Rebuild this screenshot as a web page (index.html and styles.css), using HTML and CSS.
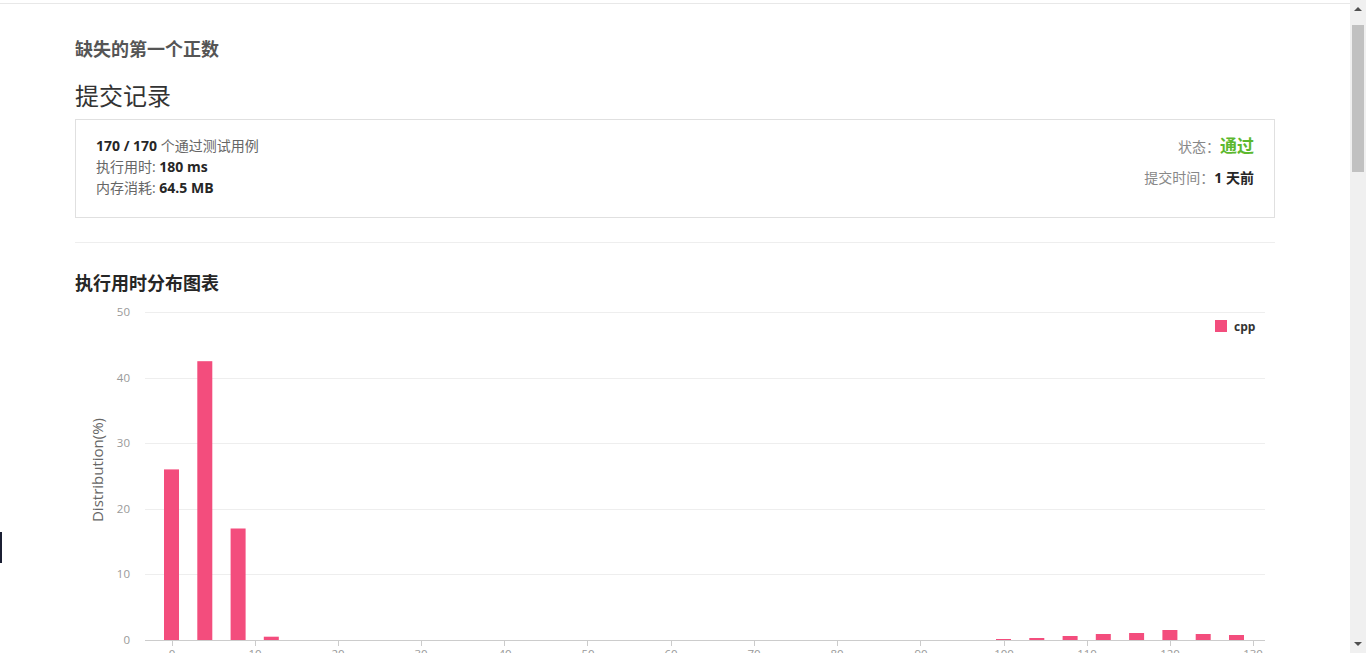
FILE: index.html
```html
<!DOCTYPE html>
<html lang="zh">
<head>
<meta charset="utf-8">
<title>提交记录</title>
<link rel="stylesheet" href="styles.css">
</head>
<body>
<div class="page">
  <div class="topbar"></div>
  <div class="container">
    <div class="problem-title">缺失的第一个正数</div>
    <h2 class="section-title">提交记录</h2>
    <div class="card">
      <div class="card-left">
        <div class="line"><b>170 / 170</b> <span class="muted">个通过测试用例</span></div>
        <div class="line"><span class="muted">执行用时:</span> <b>180 ms</b></div>
        <div class="line"><span class="muted">内存消耗:</span> <b>64.5 MB</b></div>
      </div>
      <div class="card-right">
        <div class="line"><span class="label">状态：</span><span class="status">通过</span></div>
        <div class="line time"><span class="label">提交时间：</span><b>1 天前</b></div>
      </div>
    </div>
    <div class="divider"></div>
    <h3 class="chart-title">执行用时分布图表</h3>
    <svg class="chart" width="1200" height="400" viewBox="0 0 1200 400">
      <g stroke="#eeeeee" stroke-width="1">
        <line x1="70" y1="12.5" x2="1190" y2="12.5"/>
        <line x1="70" y1="78.5" x2="1190" y2="78.5"/>
        <line x1="70" y1="143.5" x2="1190" y2="143.5"/>
        <line x1="70" y1="209.5" x2="1190" y2="209.5"/>
        <line x1="70" y1="274.5" x2="1190" y2="274.5"/>
      </g>
      <g class="ylab" text-anchor="end">
        <text x="55" y="16">50</text>
        <text x="55" y="82">40</text>
        <text x="55" y="147">30</text>
        <text x="55" y="213">20</text>
        <text x="55" y="278">10</text>
        <text x="55" y="344">0</text>
      </g>
      <text class="ytitle" transform="translate(28 170) rotate(-90)" text-anchor="middle">Distribution(%)</text>
      <g fill="#f34d7d">
        <rect x="89" y="169.4" width="15" height="170.6"/>
        <rect x="122.3" y="61.2" width="15" height="278.8"/>
        <rect x="155.6" y="228.5" width="15" height="111.5"/>
        <rect x="188.8" y="336.7" width="15" height="3.3"/>
        <rect x="921" y="339" width="15" height="1"/>
        <rect x="954.3" y="338" width="15" height="2"/>
        <rect x="987.6" y="336" width="15" height="4"/>
        <rect x="1020.8" y="334" width="15" height="6"/>
        <rect x="1054.1" y="333" width="15" height="7"/>
        <rect x="1087.4" y="330" width="15" height="10"/>
        <rect x="1120.7" y="334" width="15" height="6"/>
        <rect x="1154" y="335" width="15" height="5"/>
      </g>
      <line x1="70" y1="340.5" x2="1190" y2="340.5" stroke="#cccccc"/>
      <g stroke="#cccccc">
        <line x1="97.5" y1="340" x2="97.5" y2="346"/>
        <line x1="180.5" y1="340" x2="180.5" y2="346"/>
        <line x1="263.5" y1="340" x2="263.5" y2="346"/>
        <line x1="346.5" y1="340" x2="346.5" y2="346"/>
        <line x1="429.5" y1="340" x2="429.5" y2="346"/>
        <line x1="512.5" y1="340" x2="512.5" y2="346"/>
        <line x1="596.5" y1="340" x2="596.5" y2="346"/>
        <line x1="679.5" y1="340" x2="679.5" y2="346"/>
        <line x1="762.5" y1="340" x2="762.5" y2="346"/>
        <line x1="845.5" y1="340" x2="845.5" y2="346"/>
        <line x1="929.5" y1="340" x2="929.5" y2="346"/>
        <line x1="1012.5" y1="340" x2="1012.5" y2="346"/>
        <line x1="1095.5" y1="340" x2="1095.5" y2="346"/>
        <line x1="1178.5" y1="340" x2="1178.5" y2="346"/>
      </g>
      <g class="xlab" text-anchor="middle">
        <text x="97" y="358">0</text>
        <text x="180" y="358">10</text>
        <text x="263" y="358">20</text>
        <text x="346" y="358">30</text>
        <text x="430" y="358">40</text>
        <text x="513" y="358">50</text>
        <text x="596" y="358">60</text>
        <text x="679" y="358">70</text>
        <text x="762" y="358">80</text>
        <text x="846" y="358">90</text>
        <text x="929" y="358">100</text>
        <text x="1012" y="358">110</text>
        <text x="1095" y="358">120</text>
        <text x="1178" y="358">130</text>
      </g>
      <rect x="1140" y="20" width="12" height="12" fill="#f34d7d"/>
      <text class="legend" x="1159" y="31">cpp</text>
    </svg>
  </div>
</div>
<div class="edge-tab"></div>
<div class="scrollbar">
  <div class="arrow up"></div>
  <div class="thumb"></div>
  <div class="arrow down"></div>
</div>
</body>
</html>
```

FILE: styles.css
```css
html, body {
  margin: 0;
  padding: 0;
  overflow: hidden;
  background: #fff;
}
body {
  font-family: "Open Sans", "Noto Sans CJK SC", sans-serif;
  color: #333;
}
.page {
  margin-right: 16px;
}
.topbar {
  height: 3px;
  border-bottom: 1px solid #e8e8e8;
}
.container {
  width: 1200px;
  margin: 0 auto;
}
.problem-title {
  margin-top: 32px;
  font-size: 18px;
  line-height: 26px;
  font-weight: bold;
  color: #555;
}
.section-title {
  margin: 17px 0 0;
  font-size: 24px;
  line-height: 34px;
  font-weight: normal;
  color: #333;
}
.card {
  margin-top: 6px;
  border: 1px solid #e0e0e0;
  padding: 15px 20px 19px;
  display: flex;
  justify-content: space-between;
  font-size: 14px;
}
.line {
  line-height: 21px;
}
.line b {
  color: #262626;
}
.muted {
  color: #666;
}
.card-right {
  text-align: right;
}
.label {
  color: #888;
}
.status {
  color: #5cb82e;
  font-size: 17px;
  font-weight: bold;
}
.time {
  margin-top: 10px;
}
.divider {
  margin-top: 24px;
  border-top: 1px solid #eeeeee;
}
.chart-title {
  margin: 27px 0 0;
  font-size: 18px;
  line-height: 26px;
  font-weight: bold;
  color: #262626;
}
.chart {
  display: block;
  margin-top: 4px;
}
.ylab text, .xlab text {
  font-size: 11.5px;
  fill: #999;
  font-family: "Open Sans", sans-serif;
}
.ytitle {
  font-size: 15px;
  fill: #666;
  font-family: "Open Sans", sans-serif;
}
.legend {
  font-size: 12px;
  font-weight: bold;
  fill: #333;
  font-family: "Open Sans", sans-serif;
}
.edge-tab {
  position: fixed;
  left: 0;
  top: 532px;
  width: 2px;
  height: 31px;
  background: #1b1f33;
}
.scrollbar {
  position: fixed;
  top: 0;
  right: 0;
  width: 16px;
  height: 100%;
  background: #f0f0f0;
}
.thumb {
  position: absolute;
  top: 25px;
  left: 2px;
  width: 12px;
  height: 147px;
  background: #c1c1c1;
}
.arrow {
  position: absolute;
  left: 4px;
  width: 0;
  height: 0;
  border-left: 4px solid transparent;
  border-right: 4px solid transparent;
}
.arrow.up {
  top: 7px;
  border-bottom: 4px solid #505050;
}
.arrow.down {
  bottom: 7px;
  border-top: 4px solid #505050;
}
```
